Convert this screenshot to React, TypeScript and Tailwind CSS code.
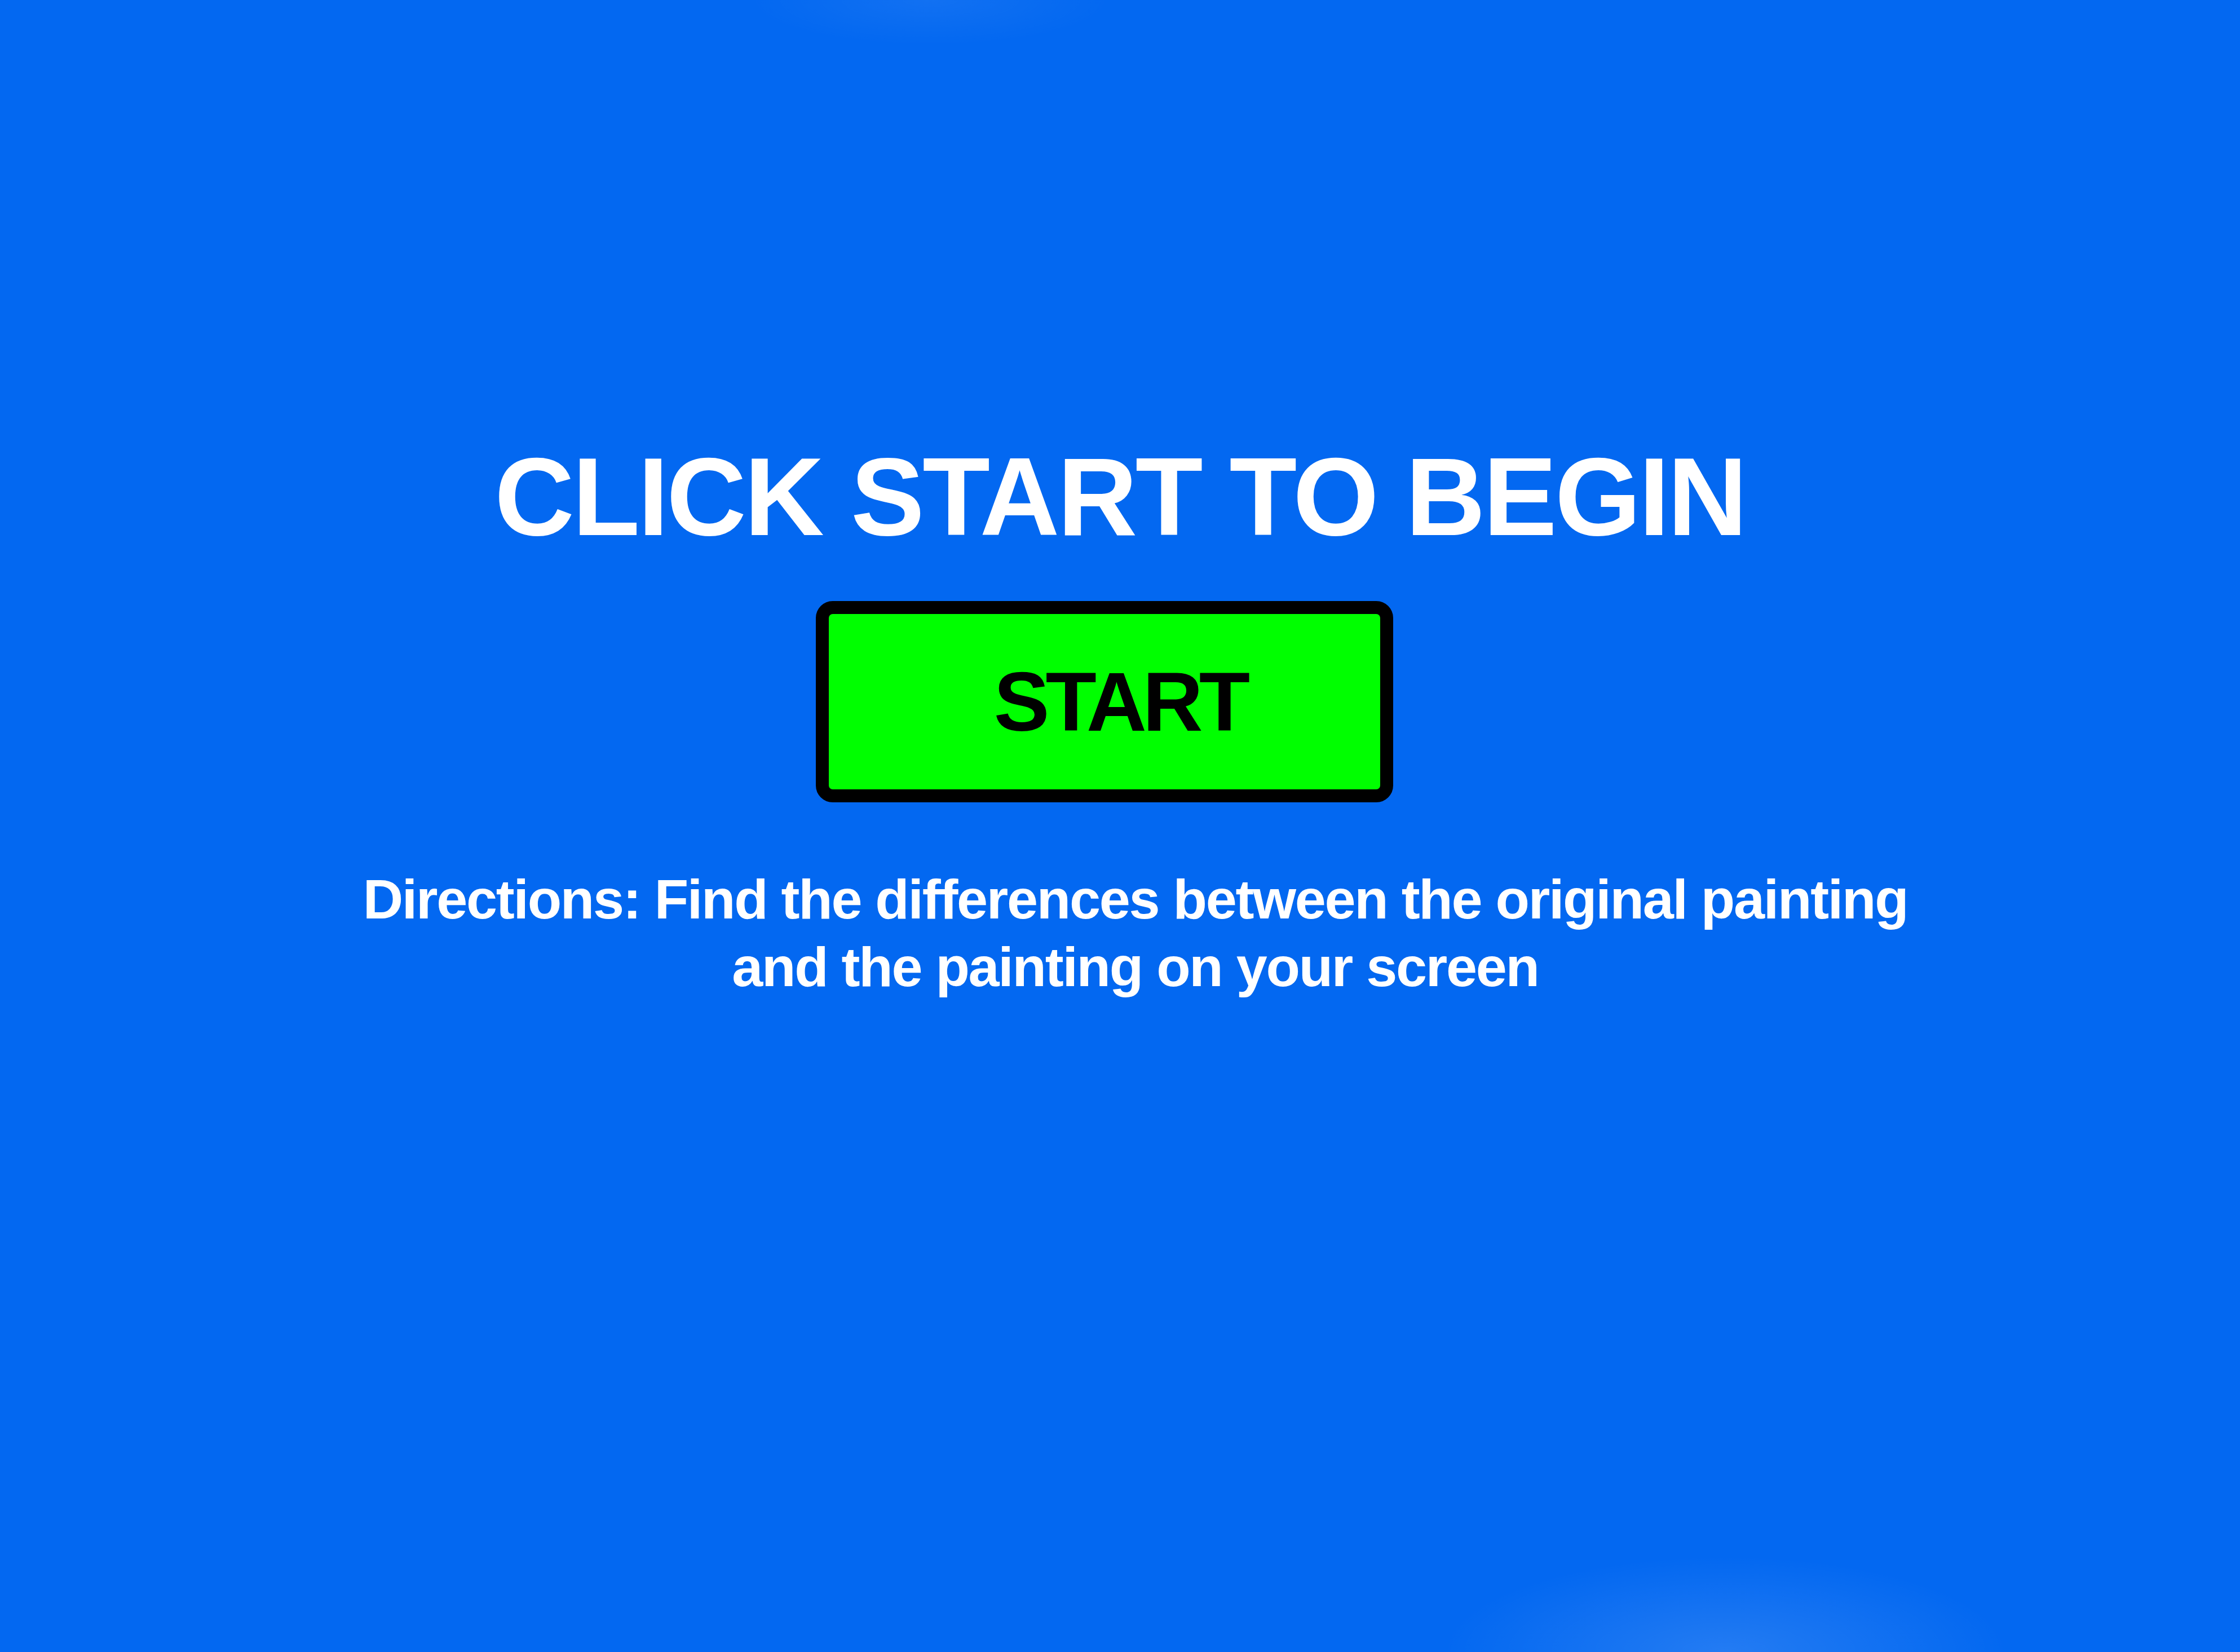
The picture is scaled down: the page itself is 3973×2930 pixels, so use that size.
export default function App() {
  return (
    <div className="flex h-screen w-full flex-col items-center overflow-hidden bg-[#0368f1] bg-[radial-gradient(ellipse_500px_170px_at_3060px_100%,rgba(255,255,255,0.13),transparent),radial-gradient(ellipse_320px_80px_at_1650px_0px,rgba(255,255,255,0.06),transparent)] font-['Liberation_Sans',Arial,sans-serif] font-bold">
      <h1 className="mt-[784px] text-[196px] leading-[196px] tracking-[-3.6px] text-white">
        CLICK START TO BEGIN
      </h1>

      <button
        type="button"
        className="mt-[86px] mr-[56px] flex h-[357px] w-[1024px] items-center justify-center rounded-[30px] border-[23px] border-black bg-[#00ff00] pl-[56px] text-[148px] leading-none tracking-[-7px] text-black"
      >
        START
      </button>

      <p className="mt-[112px] ml-[54px] text-center text-[99px] leading-[120px] tracking-[-2.3px] text-white">
        Directions: Find the differences between the original painting
        <br />
        and the painting on your screen
      </p>
    </div>
  );
}
